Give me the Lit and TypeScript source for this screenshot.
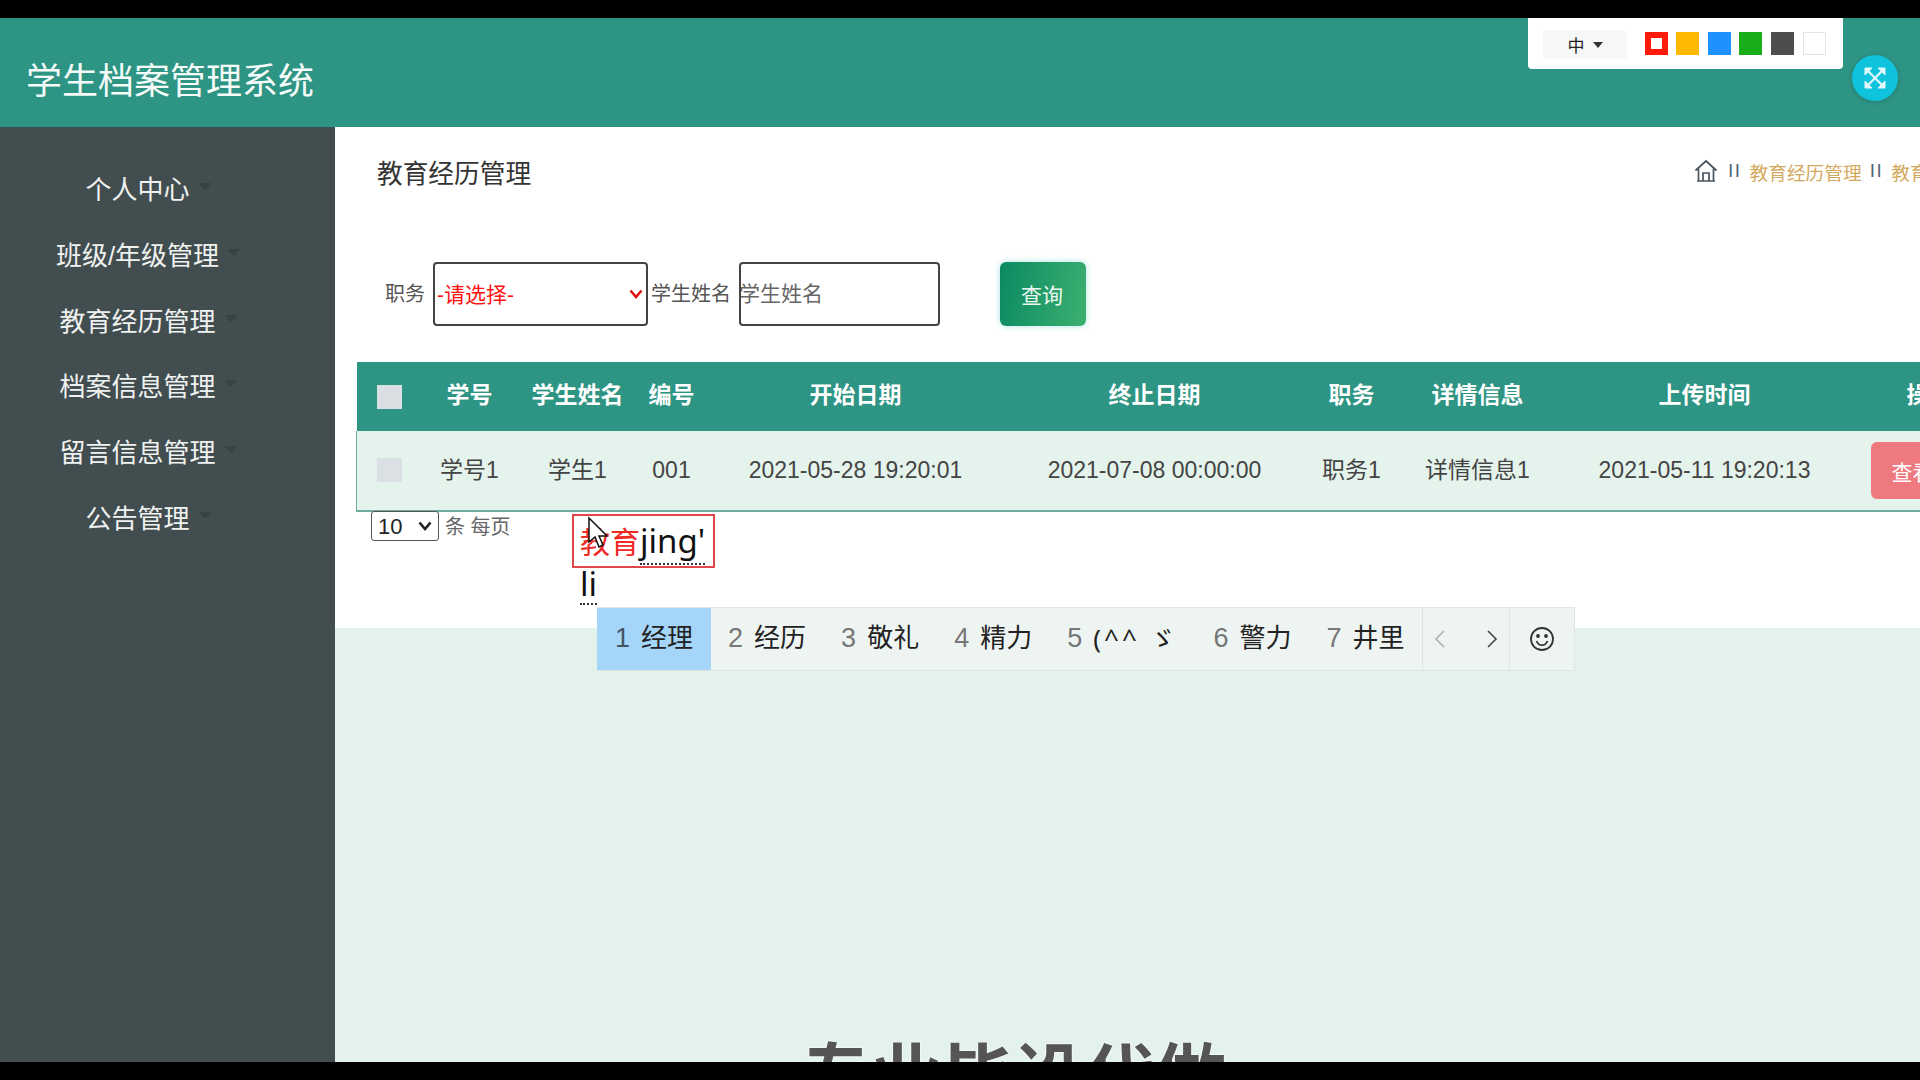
import { LitElement, html, css } from 'lit';
import { customElement } from 'lit/decorators.js';

const NAV = ['个人中心', '班级/年级管理', '教育经历管理', '档案信息管理', '留言信息管理', '公告管理'];
const COLUMNS = [
  { title: '学号', value: '学号1', width: 94 },
  { title: '学生姓名', value: '学生1', width: 122 },
  { title: '编号', value: '001', width: 66 },
  { title: '开始日期', value: '2021-05-28 19:20:01', width: 302 },
  { title: '终止日期', value: '2021-07-08 00:00:00', width: 296 },
  { title: '职务', value: '职务1', width: 98 },
  { title: '详情信息', value: '详情信息1', width: 154 },
  { title: '上传时间', value: '2021-05-11 19:20:13', width: 300 },
];
const SWATCHES = ['#ff1a0a', '#ffb900', '#1e90ff', '#19ad19', '#4d4d4d', '#ffffff'];
const CANDIDATES = ['经历', '敬礼', '精力', '', '警力', '井里'];

const chevron = (color: string) =>
  `url("data:image/svg+xml,%3Csvg xmlns='http://www.w3.org/2000/svg' width='14' height='10' viewBox='0 0 14 10'%3E%3Cpath d='M1.500 1.500 7 8l5.500-6.500' fill='none' stroke='${color}' stroke-width='2.600'/%3E%3C/svg%3E")`;

@customElement('app-root')
export class AppRoot extends LitElement {
  static styles = css`
    :host {
      display: block;
      width: 100vw;
      height: 100vh;
      overflow: hidden;
      background: #000;
      font-family: 'Liberation Sans', 'Noto Sans CJK SC', sans-serif;
    }

    .screen {
      position: relative;
      height: 100%;
      display: flex;
      flex-direction: column;
      overflow: hidden;
    }

    .bar {
      flex: none;
      height: 18px;
      background: #000;
      position: relative;
      z-index: 5;
    }

    header {
      flex: none;
      height: 109px;
      box-sizing: border-box;
      position: relative;
      display: flex;
      align-items: center;
      padding: 10px 26px 0;
      background: #2e9484;
      color: #f4fbf8;
      font-size: 36px;
    }

    .tools {
      position: absolute;
      top: 0;
      left: 1528px;
      width: 315px;
      height: 51px;
      box-sizing: border-box;
      padding: 12px 15px 0;
      display: flex;
      gap: 8.6px;
      background: #fff;
      border-radius: 0 0 4px 4px;
    }

    .lang {
      width: 84px;
      height: 29px;
      margin-right: 9px;
      display: flex;
      align-items: center;
      justify-content: center;
      gap: 8px;
      background: #f6f7f7;
      border-radius: 4px;
      color: #222;
      font-size: 17px;
    }

    .lang i {
      border: 5px solid transparent;
      border-top: 6px solid #333;
      border-bottom: 0;
    }

    .swatch {
      width: 23px;
      height: 23px;
      box-sizing: border-box;
      margin-top: 2px;
    }

    .swatch.active {
      border: 6px solid #ff1a0a;
      background: #fff !important;
    }

    .swatch.blank {
      border: 1px solid #e4e4e4;
    }

    .expand {
      position: absolute;
      left: 1852px;
      top: 37px;
      width: 46px;
      height: 46px;
      display: flex;
      align-items: center;
      justify-content: center;
      border-radius: 50%;
      background: #0fc3dc;
      box-shadow: 0 1px 5px rgba(0, 0, 0, 0.18);
    }

    .body {
      flex: 1;
      min-height: 0;
      display: flex;
    }

    aside {
      flex: none;
      width: 335px;
      box-sizing: border-box;
      padding-top: 28px;
      background: #424d50;
    }

    .nav-item {
      width: 275px;
      height: 65.7px;
      display: flex;
      align-items: center;
      justify-content: center;
      color: #f0f2f0;
      font-size: 26px;
    }

    .nav-item span {
      position: relative;
    }

    .nav-item span::after {
      content: '';
      position: absolute;
      right: -22px;
      top: 14px;
      border: 7px solid transparent;
      border-top: 7px solid #384245;
      border-bottom: 0;
    }

    main {
      flex: 1;
      min-width: 0;
      display: flex;
      flex-direction: column;
      overflow: hidden;
      background: #e4f2ec;
    }

    .panel {
      flex: none;
      height: 501px;
      box-sizing: border-box;
      padding-top: 26px;
      background: #fff;
    }

    .crumbs-row {
      height: 34px;
      padding-left: 42px;
      display: grid;
      grid-template-columns: 1317px auto;
      align-items: center;
      white-space: nowrap;
    }

    .page-title {
      color: #333;
      font-size: 25.7px;
    }

    .crumbs {
      display: flex;
      align-items: center;
      gap: 8px;
      margin-top: -1px;
      color: #d3a95e;
      font-size: 18.7px;
    }

    .crumbs svg {
      margin-right: 2px;
    }

    .sep {
      color: #52677c;
      font-size: 19px;
      letter-spacing: 1.5px;
    }

    .filters {
      height: 64px;
      margin-top: 75px;
      padding-left: 50px;
      display: flex;
      align-items: center;
    }

    label {
      color: #555;
      font-size: 20px;
      margin-top: -4px;
    }

    .filter-select,
    .filter-input {
      height: 64px;
      box-sizing: border-box;
      border: 2px solid #444;
      border-radius: 4px;
      background: #fff;
      font-family: inherit;
      font-size: 21px;
    }

    .filter-select {
      width: 215px;
      margin: 0 3px 0 8px;
      padding-left: 2px;
      appearance: none;
      background: #fff no-repeat right 3px center;
      color: #f11;
    }

    .filter-input {
      width: 201px;
      margin-left: 8px;
      padding: 0;
      text-indent: -2px;
      outline: none;
    }

    .filter-input::placeholder {
      color: #666;
    }

    .search {
      width: 86px;
      height: 64px;
      margin-left: 60px;
      padding: 0 2px 0 0;
      border: 0;
      border-radius: 6px;
      background: linear-gradient(100deg, #0b8a62, #3bb070);
      box-shadow: 0 0 6px rgba(70, 190, 190, 0.45);
      color: #eef8f2;
      font-family: inherit;
      font-size: 21px;
    }

    table {
      width: 1648px;
      margin: 36px 0 0 21px;
      table-layout: fixed;
      border-collapse: collapse;
      font-size: 23px;
      line-height: 26px;
    }

    th {
      height: 66px;
      padding: 0 0 3px;
      background: #2e9484;
      color: #fff;
      font-weight: 700;
    }

    td {
      height: 77px;
      padding: 0 0 2px;
      text-align: center;
      background: #e4f3ec;
      color: #444;
      border-bottom: 2px solid #6faca0;
    }

    td:first-child {
      border-left: 1px solid #6faca0;
    }

    .check {
      width: 25px;
      height: 24px;
      margin: 0 auto;
      background: #d9dfe3;
    }

    th .check {
      margin-top: 3px;
    }

    td .check {
      background: #dbe0e4;
    }

    .op {
      display: block;
      width: 84px;
      height: 57px;
      margin: 2px 0 0 16px;
      border: 0;
      border-radius: 6px;
      background: #ee7a80;
      color: #fff;
      font-family: inherit;
      font-size: 21px;
    }

    .pager {
      margin: -1px 0 0 36px;
      display: flex;
      align-items: center;
      gap: 6px;
      color: #666;
      font-size: 20px;
    }

    .pager select {
      width: 68px;
      height: 30px;
      padding-left: 6px;
      border: 1px solid #555;
      border-radius: 3px;
      appearance: none;
      background: #fff no-repeat right 6px center;
      color: #222;
      font-family: inherit;
      font-size: 22px;
    }

    .pager span {
      margin-top: -2px;
    }

    /* things lying on top of the page: input method, pointer, video caption */
    .compose {
      position: absolute;
      left: 572px;
      top: 514px;
      width: 143px;
      height: 54px;
      box-sizing: border-box;
      padding: 5px 0 0 6px;
      border: 2px solid #e0474a;
      font-size: 30px;
      line-height: 40px;
      white-space: nowrap;
      color: #111;
    }

    .compose b {
      font-weight: 400;
      color: #ee2a26;
    }

    .compose u {
      text-decoration: none;
      font-family: 'Noto Sans', sans-serif;
      font-size: 33px;
      border-bottom: 2px dotted #333;
    }

    .compose-next {
      position: absolute;
      left: 580px;
      top: 565px;
      border-bottom: 2px dotted #333;
      font-family: 'Noto Sans', sans-serif;
      font-size: 33px;
      line-height: 38px;
      color: #111;
    }

    .pointer {
      position: absolute;
      left: 587px;
      top: 516px;
    }

    .ime {
      position: absolute;
      left: 597px;
      top: 607px;
      width: 978px;
      height: 64px;
      box-sizing: border-box;
      display: flex;
      align-items: stretch;
      background: #eef4f1;
      border: 1px solid #dfe5e2;
      border-left: 0;
      color: #222;
      font-size: 26px;
      line-height: 30px;
      white-space: nowrap;
    }

    .cand {
      display: flex;
      align-items: center;
      gap: 11px;
      padding: 0 17.500px 2px;
    }

    .cand em {
      font-style: normal;
      font-size: 27px;
      color: #777;
    }

    .cand.on {
      width: 114px;
      box-sizing: border-box;
      padding-left: 18px;
      background: #a6d5fa;
    }

    .cand.on em {
      color: #456;
    }

    .kao {
      letter-spacing: 3px;
      font-family: 'Noto Sans', 'Noto Sans CJK SC', sans-serif;
    }

    .pages {
      margin-left: auto;
      width: 93px;
      display: flex;
      align-items: center;
      justify-content: center;
      gap: 38px;
      border-left: 1px solid #dfe5e2;
    }

    .smile {
      width: 69px;
      display: flex;
      align-items: center;
      justify-content: center;
      border-left: 1px solid #dfe5e2;
    }

    .caption {
      position: absolute;
      left: 800px;
      top: 1026px;
      color: #555;
      font-family: 'Noto Sans CJK SC', sans-serif;
      font-size: 71px;
      font-weight: 700;
      line-height: 90px;
      white-space: nowrap;
      text-shadow: 0 0 2px #fff, 0 0 2px #fff;
    }
  `;

  render() {
    return html`<div class="screen">
      <div class="bar"></div>
      ${this.renderHeader()}
      <div class="body">
        <aside>
          ${NAV.map((n) => html`<div class="nav-item"><span>${n}</span></div>`)}
        </aside>
        <main>${this.renderPanel()}</main>
      </div>
      <div class="bar"></div>
      ${this.renderOverlays()}
    </div>`;
  }

  private renderHeader() {
    return html`<header>
      学生档案管理系统
      <div class="tools">
        <div class="lang">中<i></i></div>
        ${SWATCHES.map(
          (c, i) => html`<div
            class="swatch ${i === 0 ? 'active' : ''} ${i === 5 ? 'blank' : ''}"
            style="background:${c}"
          ></div>`
        )}
      </div>
      <div class="expand">
        <svg width="24" height="24" viewBox="0 0 24 24" fill="none" stroke="#dff8fb" stroke-width="2.200">
          <path d="M4 4 20 20M20 4 4 20" />
          <path d="M2 9V2h7zM15 2h7v7zM22 15v7h-7zM9 22H2v-7z" fill="#dff8fb" stroke-width="1" />
        </svg>
      </div>
    </header>`;
  }

  private renderPanel() {
    return html`<section class="panel">
      <div class="crumbs-row">
        <div class="page-title">教育经历管理</div>
        <div class="crumbs">
          <svg width="24" height="24" viewBox="0 0 24 24" fill="none" stroke="#4a5560" stroke-width="1.700">
            <path d="M1.500 11.500 12 2l10.500 9.500" />
            <path d="M4.500 9.500V22h15V9.500M9 22v-8h6v8M3 22h18" />
          </svg>
          <span class="sep">II</span>
          <span>教育经历管理</span>
          <span class="sep">II</span>
          <span>教育经历信息</span>
        </div>
      </div>
      <div class="filters">
        <label>职务</label>
        <select class="filter-select" style="background-image:${chevron('%23e01010')}">
          <option>-请选择-</option>
        </select>
        <label>学生姓名</label>
        <input class="filter-input" placeholder="学生姓名" />
        <button class="search">查询</button>
      </div>
      ${this.renderTable()}
      <div class="pager">
        <select style="background-image:${chevron('%23222')}"><option>10</option></select>
        <span>条 每页</span>
      </div>
    </section>`;
  }

  private renderTable() {
    return html`<table>
      <colgroup>
        <col style="width:66px" />
        ${COLUMNS.map((c) => html`<col style="width:${c.width}px" />`)}
        <col style="width:150px" />
      </colgroup>
      <tr>
        <th><div class="check"></div></th>
        ${COLUMNS.map((c) => html`<th>${c.title}</th>`)}
        <th>操作</th>
      </tr>
      <tr>
        <td><div class="check"></div></td>
        ${COLUMNS.map((c) => html`<td>${c.value}</td>`)}
        <td><button class="op">查看</button></td>
      </tr>
    </table>`;
  }

  private renderOverlays() {
    return html`
      <div class="caption">专业毕设代做</div>
      <div class="bar" style="position:absolute;left:0;right:0;bottom:0"></div>
      <div class="compose"><b>教育</b><u>jing'</u></div>
      <div class="compose-next">li</div>
      <div class="ime">
        <div class="cand on"><em>1</em>经理</div>
        ${CANDIDATES.map(
          (c, i) => html`<div class="cand">
            <em>${i + 2}</em>${c || html`<span class="kao">(^^ ゞ</span>`}
          </div>`
        )}
        <div class="pages">
          <svg width="14" height="20" viewBox="0 0 14 20" fill="none" stroke="#a9b0ad" stroke-width="1.600">
            <path d="M11 2 3 10l8 8" />
          </svg>
          <svg width="14" height="20" viewBox="0 0 14 20" fill="none" stroke="#444" stroke-width="1.600">
            <path d="M3 2l8 8-8 8" />
          </svg>
        </div>
        <div class="smile">
          <svg width="26" height="26" viewBox="0 0 26 26" fill="none" stroke="#333" stroke-width="1.800">
            <circle cx="13" cy="13" r="11" />
            <path d="M7.500 15c1.200 3 3.200 4.200 5.500 4.200s4.300-1.200 5.500-4.200" />
            <circle cx="9" cy="10" r="1" fill="#333" />
            <circle cx="17" cy="10" r="1" fill="#333" />
          </svg>
        </div>
      </div>
      <svg class="pointer" width="22" height="34" viewBox="0 0 22 34">
        <path d="M2 2v24l6-5 4 10 4-2-4-9h8z" fill="#fff" stroke="#111" stroke-width="1.500" />
      </svg>
    `;
  }
}
